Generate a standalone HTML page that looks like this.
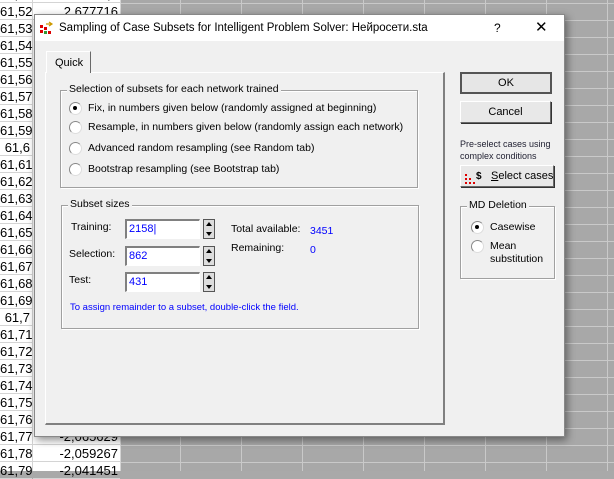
<!DOCTYPE html>
<html><head><meta charset="utf-8"><style>
*{margin:0;padding:0;box-sizing:border-box}
body{width:614px;height:471px;overflow:hidden;position:relative;background:#a9a9a9;font-family:"Liberation Sans",sans-serif;font-size:10.5px;color:#000}
.grid{position:absolute;left:121px;top:0;width:493px;height:471px;background-color:#a8a8a8;
background-image:linear-gradient(#c9c9c9 1px,transparent 1px),linear-gradient(90deg,#c9c9c9 1px,transparent 1px);
background-size:61px 17px;background-position:0 3px,-2px 0}
.col{position:absolute;top:0;height:471px;background:#fff;border-right:1px solid #d4d4d4}
.cell{position:absolute;height:17px;line-height:17px;font-size:13px;text-align:right;border-bottom:1px solid #d4d4d4;width:100%;padding-right:2px}
.a{position:absolute}
.dlg{position:absolute;left:34px;top:14px;width:531px;height:423px;background:#f0f0f0;border:1px solid #888;box-shadow:2px 3px 8px rgba(0,0,0,.45)}
.title{position:absolute;left:0;top:0;width:100%;height:26px;background:#fff;font-size:11.5px;line-height:26px}
.grp{position:absolute;border:1px solid #a0a0a0;box-shadow:1px 1px 0 #fff inset,1px 1px 0 #fff}
.lg{position:absolute;top:-8px;left:6px;background:#f0f0f0;padding:0 2px;font-size:10.5px;white-space:nowrap}
.rad{position:absolute;font-size:10.5px;padding-left:19px;white-space:nowrap}
.rad:before{content:"";position:absolute;left:0;top:0;width:11px;height:11px;border-radius:50%;background:#fff;border:1px solid #888;border-right-color:#ddd;border-bottom-color:#ddd}
.rad.on:after{content:"";position:absolute;left:4px;top:4px;width:4px;height:4px;border-radius:50%;background:#000}
.btn{position:absolute;background:#e8e8e8;border:1px solid #fff;border-right-color:#696969;border-bottom-color:#696969;box-shadow:1px 1px 0 #333;text-align:center;font-size:11px;white-space:nowrap}
.inp{position:absolute;width:75px;height:20px;background:#fff;border:1px solid #fff;border-top:2px solid #808080;border-left:2px solid #808080;color:#00f;font-size:11px;line-height:16px;padding-left:2px}
.spin{position:absolute;width:12px;height:20px;border:1px solid #555;background:#ddd}
.spin:before{content:"";position:absolute;left:2px;top:2px;border:3px solid transparent;border-bottom:4px solid #000;border-top:0}
.spin:after{content:"";position:absolute;left:2px;bottom:2px;border:3px solid transparent;border-top:4px solid #000;border-bottom:0}
.lbl{position:absolute;font-size:10.5px;white-space:nowrap}
.blue{color:#00f}
</style></head><body>
<div class="grid"></div>
<div class="col" style="left:0;width:33px">
<div class="cell" style="top:-14px">61,51</div>
<div class="cell" style="top:3px">61,52</div><div class="cell" style="top:20px">61,53</div><div class="cell" style="top:37px">61,54</div><div class="cell" style="top:54px">61,55</div><div class="cell" style="top:71px">61,56</div><div class="cell" style="top:88px">61,57</div><div class="cell" style="top:105px">61,58</div><div class="cell" style="top:122px">61,59</div><div class="cell" style="top:139px">61,6</div><div class="cell" style="top:156px">61,61</div><div class="cell" style="top:173px">61,62</div><div class="cell" style="top:190px">61,63</div><div class="cell" style="top:207px">61,64</div><div class="cell" style="top:224px">61,65</div><div class="cell" style="top:241px">61,66</div><div class="cell" style="top:258px">61,67</div><div class="cell" style="top:275px">61,68</div><div class="cell" style="top:292px">61,69</div><div class="cell" style="top:309px">61,7</div><div class="cell" style="top:326px">61,71</div><div class="cell" style="top:343px">61,72</div><div class="cell" style="top:360px">61,73</div><div class="cell" style="top:377px">61,74</div><div class="cell" style="top:394px">61,75</div><div class="cell" style="top:411px">61,76</div><div class="cell" style="top:428px">61,77</div><div class="cell" style="top:445px">61,78</div><div class="cell" style="top:462px">61,79</div>
</div>
<div class="col" style="left:33px;width:88px">
<div class="cell" style="top:-14px">2,7</div>
<div class="cell" style="top:3px">2,677716</div>
<div class="cell" style="top:428px">-2,065629</div><div class="cell" style="top:445px">-2,059267</div><div class="cell" style="top:462px">-2,041451</div>
</div>

<div class="dlg">
<div class="title">
 <svg class="a" style="left:5px;top:6px" width="14" height="14"><rect x="0" y="4" width="3" height="3" fill="#d00"/><rect x="0" y="9" width="3" height="3" fill="#d00"/><rect x="4" y="6" width="3" height="3" fill="#d00"/><rect x="4" y="10" width="3" height="3" fill="#393"/><rect x="8" y="10" width="3" height="3" fill="#d00"/><path d="M6 3h5M9 1l3 2-3 2" stroke="#c90" fill="none" stroke-width="1.2"/></svg>
 <span class="a" style="left:24px">Sampling of Case Subsets for Intelligent Problem Solver: Нейросети.sta</span>
 <span class="a" style="left:459px;font-size:12px">?</span>
 <span class="a" style="left:500px;font-size:15px">✕</span>
</div>
<div class="a" style="left:11px;top:36px;width:45px;height:22px;border:1px solid #fff;border-right:1px solid #696969;border-bottom:none;background:#f0f0f0;z-index:2;font-size:11px;padding:5px 0 0 8px">Quick</div>
<div class="a" style="left:10px;top:57px;width:400px;height:353px;border:1px solid #fff;border-right:2px solid #808080;border-bottom:2px solid #808080"></div>

<div class="grp" style="left:25px;top:75px;width:358px;height:98px">
 <span class="lg">Selection of subsets for each network trained</span>
 <div class="rad on" style="left:8px;top:11px">Fix, in numbers given below (randomly assigned at beginning)</div>
 <div class="rad" style="left:8px;top:30px">Resample, in numbers given below (randomly assign each network)</div>
 <div class="rad" style="left:8px;top:51px">Advanced random resampling (see Random tab)</div>
 <div class="rad" style="left:8px;top:72px">Bootstrap resampling (see Bootstrap tab)</div>
</div>

<div class="grp" style="left:26px;top:190px;width:358px;height:124px">
 <span class="lg">Subset sizes</span>
 <span class="lbl" style="left:9px;top:15px">Training:</span>
 <span class="lbl" style="left:7px;top:42px">Selection:</span>
 <span class="lbl" style="left:7px;top:68px">Test:</span>
 <div class="inp" style="left:63px;top:13px">2158|</div><div class="spin" style="left:141px;top:13px"></div>
 <div class="inp" style="left:63px;top:40px">862</div><div class="spin" style="left:141px;top:40px"></div>
 <div class="inp" style="left:63px;top:66px">431</div><div class="spin" style="left:141px;top:66px"></div>
 <span class="lbl" style="left:169px;top:17px">Total available:</span><span class="lbl blue" style="left:248px;top:19px">3451</span>
 <span class="lbl" style="left:169px;top:36px">Remaining:</span><span class="lbl blue" style="left:248px;top:38px">0</span>
 <span class="lbl blue" style="left:8px;top:96px;font-size:9.5px">To assign remainder to a subset, double-click the field.</span>
</div>

<div class="btn" style="left:425px;top:57px;width:92px;height:22px;line-height:18px;border:2px solid #555;box-shadow:none;background:#e6e6e6">OK</div>
<div class="btn" style="left:425px;top:86px;width:91px;height:22px;line-height:20px">Cancel</div>
<span class="lbl" style="left:425px;top:123px;font-size:9px;color:#223;line-height:12px">Pre-select cases using<br>complex conditions</span>
<div class="btn" style="left:425px;top:150px;width:94px;height:22px;line-height:20px;text-align:left;padding-left:30px">
 <svg class="a" style="left:4px;top:4px" width="20" height="14"><g fill="#d00"><rect x="0" y="4" width="2" height="2"/><rect x="0" y="8" width="2" height="2"/><rect x="0" y="12" width="2" height="2"/><rect x="4" y="8" width="2" height="2"/><rect x="4" y="12" width="2" height="2"/><rect x="8" y="12" width="2" height="2"/></g><text x="11" y="9" font-size="10" font-weight="bold" font-family="Liberation Sans">$</text></svg>
 <u>S</u>elect cases</div>

<div class="grp" style="left:425px;top:191px;width:95px;height:73px">
 <span class="lg">MD Deletion</span>
 <div class="rad on" style="left:10px;top:14px">Casewise</div>
 <div class="rad" style="left:10px;top:33px;line-height:13px">Mean<br>substitution</div>
</div>
</div>
</body></html>
